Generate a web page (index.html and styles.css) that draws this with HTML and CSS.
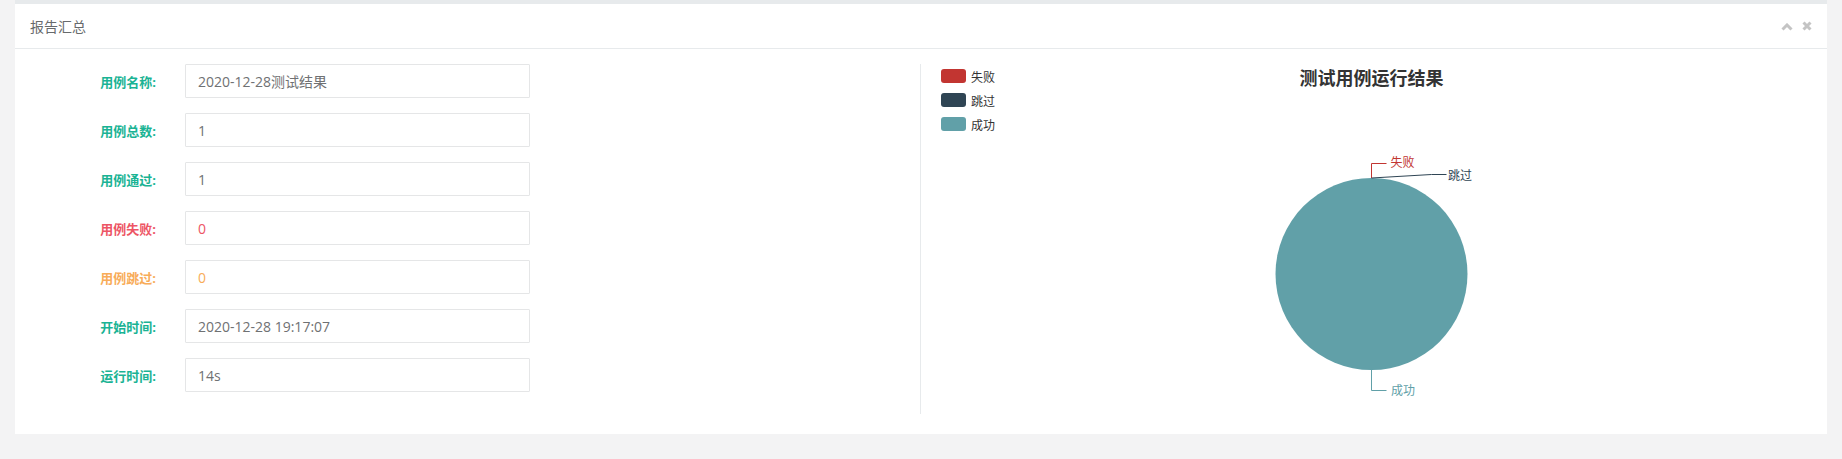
FILE: index.html
```html
<!DOCTYPE html>
<html lang="zh-CN">
<head>
<meta charset="utf-8">
<title>报告汇总</title>
<link rel="stylesheet" href="styles.css">
</head>
<body>
<div class="wrapper">
  <div class="ibox">
    <div class="ibox-title">
      <h5>报告汇总</h5>
      <div class="tools">
        <svg class="icon-up" width="12" height="8" viewBox="0 0 12 8"><polyline points="1.5,6.5 6,2 10.5,6.5" fill="none" stroke="#c4c4c4" stroke-width="3"/></svg>
        <svg class="icon-x" width="10" height="10" viewBox="0 0 10 10"><path d="M1.5 1.5 L8.5 8.5 M8.5 1.5 L1.5 8.5" fill="none" stroke="#c4c4c4" stroke-width="3"/></svg>
      </div>
    </div>
    <div class="ibox-content">
      <div class="col-left">
        <div class="form-row"><label class="lbl ok">用例名称:</label><div class="field">2020-12-28测试结果</div></div>
        <div class="form-row"><label class="lbl ok">用例总数:</label><div class="field">1</div></div>
        <div class="form-row"><label class="lbl ok">用例通过:</label><div class="field">1</div></div>
        <div class="form-row"><label class="lbl fail">用例失败:</label><div class="field fail">0</div></div>
        <div class="form-row"><label class="lbl skip">用例跳过:</label><div class="field skip">0</div></div>
        <div class="form-row"><label class="lbl ok">开始时间:</label><div class="field">2020-12-28 19:17:07</div></div>
        <div class="form-row"><label class="lbl ok">运行时间:</label><div class="field">14s</div></div>
      </div>
      <div class="col-right">
        <svg class="chart" width="871" height="350" viewBox="0 0 871 350">
          <g class="legend">
            <rect x="5" y="5" width="25" height="14" rx="3" fill="#c23531"/>
            <text x="35" y="12" dominant-baseline="central">失败</text>
            <rect x="5" y="29" width="25" height="14" rx="3" fill="#2f4554"/>
            <text x="35" y="36" dominant-baseline="central">跳过</text>
            <rect x="5" y="53" width="25" height="14" rx="3" fill="#61a0a8"/>
            <text x="35" y="60" dominant-baseline="central">成功</text>
          </g>
          <text class="chart-title" x="435.5" y="13" text-anchor="middle" dominant-baseline="central">测试用例运行结果</text>
          <circle cx="435.5" cy="210" r="96" fill="#61a0a8"/>
          <polyline points="435.5,114 435.5,99.5 450.5,99.5" fill="none" stroke="#c23531" stroke-width="1"/>
          <text class="pie-lbl" x="454.5" y="97.5" dominant-baseline="central" fill="#c23531">失败</text>
          <polyline points="435.5,114 495.5,110.5 510.5,110.5" fill="none" stroke="#2f4554" stroke-width="1"/>
          <text class="pie-lbl" x="512" y="110" dominant-baseline="central" fill="#2f4554">跳过</text>
          <polyline points="435.5,306 435.5,326.5 450.5,326.5" fill="none" stroke="#61a0a8" stroke-width="1"/>
          <text class="pie-lbl" x="455" y="325" dominant-baseline="central" fill="#61a0a8">成功</text>
        </svg>
      </div>
    </div>
  </div>
</div>
</body>
</html>
```
FILE: styles.css
```css
html, body {
  margin: 0;
  padding: 0;
}
body {
  background: #f3f3f4;
  font-family: "Open Sans", "Noto Sans CJK SC", sans-serif;
  color: #676a6c;
  font-size: 13px;
  min-height: 459px;
}
.wrapper {
  padding: 0 15px;
}
.ibox {
  background: #ffffff;
}
.ibox-title {
  border-top: 4px solid #e7eaec;
  border-bottom: 1px solid #e7eaec;
  height: 44px;
  padding: 0 15px;
  display: flex;
  align-items: center;
  justify-content: space-between;
}
.ibox-title h5 {
  margin: 0;
  font-size: 14px;
  font-weight: normal;
  color: #676a6c;
  font-family: "Noto Sans CJK SC", sans-serif;
}
.tools {
  display: flex;
  align-items: center;
  gap: 9px;
}
.icon-up {
  display: block;
  margin-top: 1px;
}
.icon-x {
  display: block;
}
.ibox-content {
  display: grid;
  grid-template-columns: 885px 1fr;
  padding: 15px 20px 20px;
}
.col-left {
  display: flex;
  flex-direction: column;
  gap: 15px;
}
.form-row {
  display: flex;
  align-items: center;
  gap: 29px;
}
.lbl {
  width: 121px;
  text-align: right;
  font-weight: bold;
  font-size: 13px;
  font-family: "Open Sans", "Noto Sans CJK SC", sans-serif;
}
.lbl.ok { color: #1ab394; }
.lbl.fail { color: #ed5565; }
.lbl.skip { color: #f8ac59; }
.field {
  box-sizing: border-box;
  width: 345px;
  height: 34px;
  border: 1px solid #e5e6e7;
  border-radius: 1px;
  padding: 0 12px;
  display: flex;
  align-items: center;
  font-size: 14px;
  color: #6f7173;
  font-family: "Open Sans", "Noto Sans CJK SC", sans-serif;
}
.field.fail { color: #ed5565; }
.field.skip { color: #f8ac59; }
.col-right {
  border-left: 1px solid #e7eaec;
  padding-left: 15px;
}
.chart {
  display: block;
}
.legend text {
  font-family: "Noto Sans CJK SC", sans-serif;
  font-size: 12px;
  fill: #333333;
}
.chart-title {
  font-family: "Noto Sans CJK SC", sans-serif;
  font-size: 18px;
  font-weight: bold;
  fill: #333333;
}
.pie-lbl {
  font-family: "Noto Sans CJK SC", sans-serif;
  font-size: 12px;
}
```
